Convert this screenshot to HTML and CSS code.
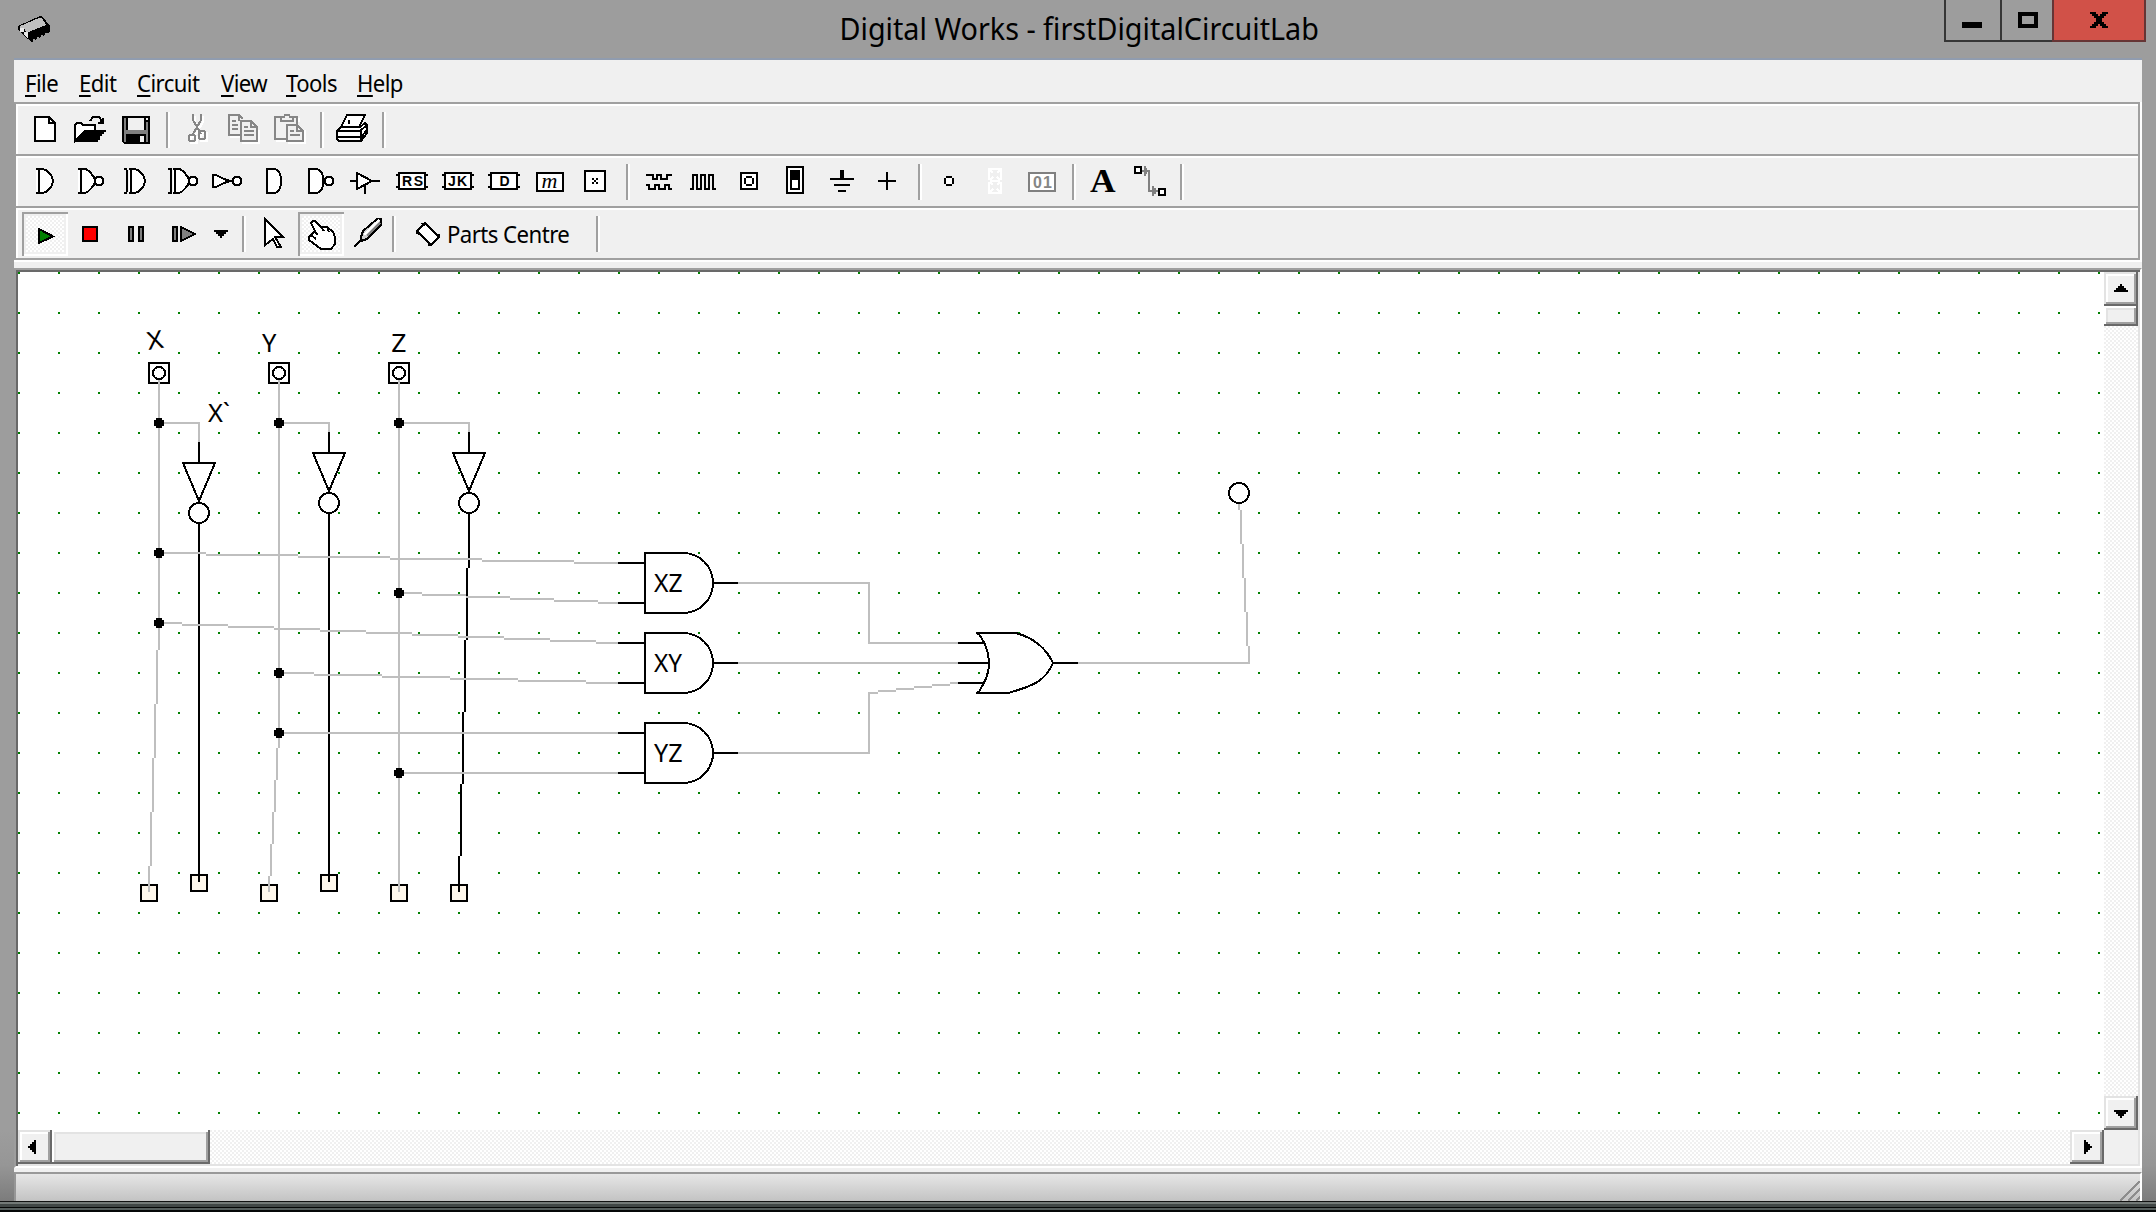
FILE: index.html
```html
<!DOCTYPE html>
<html lang="en">
<head>
<meta charset="utf-8">
<title>Digital Works - firstDigitalCircuitLab</title>
<link rel="stylesheet" href="styles.css">
</head>
<body>
<div class="window">
  <header class="titlebar">
    <svg class="app-icon" width="32" height="26" viewBox="0 0 16 13"><path d="M0 5L11 0H12L16 5V8L7 13L3 10L0 7Z" fill="#000"/><path d="M1 5L10.500 1H12L14 4.500L4 8.500L3.500 6.500H1Z" fill="#c0c0c0"/><path d="M1 6H3V8H1ZM3 8H5V11L3 9.500Z" fill="#e8e8e8"/><path d="M8 11.500V13M10 10.500V12.500M12 9.500V11.500M14 8.500V10.500" stroke="#9d9d9d" stroke-width=".8"/></svg>
    <h1 class="title"><span>Digital Works - firstDigitalCircuitLab</span></h1>
    <div class="controls">
      <button class="ctl min" aria-label="Minimize"><i></i></button>
      <button class="ctl max" aria-label="Maximize"><i></i></button>
      <button class="ctl close" aria-label="Close"><svg width="18" height="16" viewBox="0 0 9 8"><path d="M0 0H3V1H4V2H5V1H6V0H9V1H8V2H7V3H6V5H7V6H8V7H9V8H6V7H5V6H4V7H3V8H0V7H1V6H2V5H3V3H2V2H1V1H0Z"/></svg></button>
    </div>
  </header>
  <div class="client">
    <nav class="menu">
      <span class="m-file"><u>F</u>ile</span><span class="m-edit"><u>E</u>dit</span><span class="m-circuit"><u>C</u>ircuit</span><span class="m-view"><u>V</u>iew</span><span class="m-tools"><u>T</u>ools</span><span class="m-help"><u>H</u>elp</span>
    </nav>
    <div class="bars">
      <div class="bar">
        <svg class="tool" viewBox="0 0 23 24"><path class="w" d="M6.500 5.500H13.500L16.500 8.500V17.500H6.500Z"/><path class="k" d="M13.500 5.500V8.500H16.500"/></svg>
        <svg class="tool" viewBox="0 0 23 24"><path class="w" d="M3.500 17.500V9.500L4.500 8.500H6.500L7.500 9.500H13.500V12.500H8.500Z"/><path d="M8 12H19V13H18V14H17V15H16V17H15V18H3V17H4V16H5V15H6V14H7V13H8Z"/><path class="k" d="M11 7.500L12.500 5.500H15.500L17 7.500"/><path d="M18 6V9H15V8H16V7H17V6Z"/></svg>
        <svg class="tool" viewBox="0 0 23 24"><path d="M4 5H18V19H5L4 18Z"/><path fill="#808080" d="M5 6H6V18H5ZM16 8H17V18H16ZM6 12H16V14H6Z"/><path fill="#f0f0f0" d="M7 6H15V12H7ZM13 15H15V18H13ZM16 6H17V7H16Z"/></svg>
        <i class="sep"></i>
        <svg class="tool off" viewBox="0 0 23 24"><g class="hi" transform="translate(1 1)"><path d="M8.500 4V7L12.500 14M12.500 4V7L8.500 14"/><rect x="6.500" y="14.500" width="3" height="3"/><rect x="11.500" y="12.500" width="3" height="4"/></g><path d="M8.500 4V7L12.500 14M12.500 4V7L8.500 14"/><rect x="6.500" y="14.500" width="3" height="3" rx="1"/><rect x="11.500" y="12.500" width="3" height="4" rx="1"/></svg>
        <svg class="tool off" viewBox="0 0 23 24"><path class="hi" d="M4 15.500H9M10 18.500H18.500V12"/><path d="M9 14.500H3.500V4.500H8.500L10.500 6.500M8.500 5V7.500M5 7.500H7M5 9.500H8M5 11.500H8"/><path d="M9.500 7.500H14.500L17.500 10.500V17.500H9.500ZM14.500 7.500V10.500H17.500M11 10.500H13M11 12.500H16M11 14.500H16"/></svg>
        <svg class="tool off" viewBox="0 0 23 24"><path class="hi" d="M4 17.500H9M10 18.500H18.500V12M15.500 6V8"/><path d="M9 16.500H3.500V5.500H6.500V7.500H12.500V5.500H14.500V9M6.500 5.500H8L8.500 4.500H10.500L11 5.500H12.500"/><path d="M9.500 9.500H14.500L17.500 12.500V17.500H9.500ZM14.500 9.500V12.500H17.500M11 12.500H13M11 14.500H16"/></svg>
        <i class="sep"></i>
        <svg class="tool" viewBox="0 0 23 24"><path class="w" d="M5.500 10.500L8.500 4.500H17.500L14.500 10.500Z"/><path class="w" d="M3.500 12.500L5.500 10.500H15L17.500 8.500L18.500 9.500V13.500L15.500 17.500H4.500L3.500 16.500Z"/><path class="k" d="M3 12.500H15.500V17M15 12.500L18.500 9.500M4 15.500H15.500L18.500 12M9 7.500H10M9 8.500H10"/></svg>
        <i class="sep"></i>
      </div>
      <div class="bar">
        <svg class="tool" viewBox="0 0 23 24"><path class="w" d="M7 5.500H10.500C13 6 15.500 9 15.500 11.500S13 17 10.500 17.500H7M8.500 5.500V17.500"/></svg>
        <svg class="tool" viewBox="0 0 23 24"><path class="w" d="M5 5.500H8.500C10.500 6 13.500 9.500 13.500 11.500S10.500 17 8.500 17.500H5M6.500 5.500V17.500"/><path class="w" d="M14.700 9.500H16.300L17.500 10.700V12.300L16.300 13.500H14.700L13.500 12.300V10.700Z"/></svg>
        <svg class="tool" viewBox="0 0 23 24"><path class="w" d="M7.500 5.500H10.500C13 6 15.500 9 15.500 11.500S13 17 10.500 17.500H7.500M8.500 5.500V17.500"/><path class="k" d="M5 5.500H6.500M5 17.500H6.500M6.500 6V17"/></svg>
        <svg class="tool" viewBox="0 0 23 24"><path class="w" d="M6.500 5.500H9.500C11.500 6 14.500 9.500 14.500 11.500S11.500 17 9.500 17.500H6.500M7.500 5.500V17.500"/><path class="k" d="M4 5.500H5.500V17.500H4"/><path class="w" d="M15.700 9.500H17.300L18.500 10.700V12.300L17.300 13.500H15.700L14.500 12.300V10.700Z"/></svg>
        <svg class="tool" viewBox="0 0 23 24"><path class="w" d="M3.500 8.500H5L9 10.500L12 11.500L9 12.500L5 14.500H3.500Z"/><path class="k" d="M10 11.500H13"/><path class="w" d="M14.700 9.500H16.300L17.500 10.700V12.300L16.300 13.500H14.700L13.500 12.300V10.700Z"/></svg>
        <svg class="tool" viewBox="0 0 23 24"><path class="w" d="M7.500 5.500H11.500C13 6 14.500 8 14.500 11.500S13 17 11.500 17.500H7.500Z"/></svg>
        <svg class="tool" viewBox="0 0 23 24"><path class="w" d="M5.500 5.500H9.500C11.500 6 12.700 8 12.700 11.500S11.500 17 9.500 17.500H5.500Z"/><path class="w" d="M14.700 9.500H16.300L17.500 10.700V12.300L16.300 13.500H14.700L13.500 12.300V10.700Z"/></svg>
        <svg class="tool" viewBox="0 0 23 24"><path class="k" d="M3 11.500H6M13 11.500H18M10.500 13V18"/><path class="w" d="M6.500 7.500L14 11.500L6.500 15.500Z"/></svg>
        <svg class="tool" viewBox="0 0 23 24"><rect class="w" x="4.500" y="7.500" width="13" height="8"/><path class="k" d="M3 8.500H4M3 14.500H4M18 8.500H19M18 14.500H19"/><text x="6" y="14.200" textLength="10.500">RS</text></svg>
        <svg class="tool" viewBox="0 0 23 24"><rect class="w" x="4.500" y="7.500" width="13" height="8"/><path class="k" d="M3 8.500H4M3 14.500H4M18 8.500H19M18 14.500H19"/><text x="6" y="14.200" textLength="9.500">JK</text></svg>
        <svg class="tool" viewBox="0 0 23 24"><rect class="w" x="4.500" y="7.500" width="13" height="8"/><path class="k" d="M3 8.500H4M3 14.500H4M18 8.500H19M18 14.500H19"/><text x="8.700" y="14.200">D</text></svg>
        <svg class="tool" viewBox="0 0 23 24"><rect class="w" x="4.500" y="7.500" width="13" height="9"/><text class="em" x="6.800" y="14.800">m</text></svg>
        <svg class="tool" viewBox="0 0 23 24"><rect class="w" x="5.500" y="6.500" width="10" height="10"/><path d="M9 10H10V11H11V10H12V11H11V12H12V13H11V12H10V13H9V12H10V11H9Z"/></svg>
        <i class="sep"></i>
        <svg class="tool" viewBox="0 0 23 24"><path class="k" d="M5 8.500H8.500V10.500H10.500V8.500H12.500V10.500H15.500V8.500H18M5 13.500H6.500V15.500H9.500V13.500H11.500V15.500H14.500V13.500H16.500V15.500H18"/></svg>
        <svg class="tool" viewBox="0 0 23 24"><path class="k" d="M4 15.500H5.500V8.500H7.500V15.500H9.500V8.500H11.500V15.500H13.500V8.500H15.500V15.500H17"/></svg>
        <svg class="tool" viewBox="0 0 23 24"><rect class="w" x="6.500" y="7.500" width="8" height="8"/><path d="M9 9H12V10H13V13H12V14H9V13H8V10H9Z"/><rect x="9" y="10" width="3" height="3" fill="#fff"/></svg>
        <svg class="tool" viewBox="0 0 23 24"><rect class="w" x="6.500" y="4.500" width="8" height="13"/><rect class="w" x="8.500" y="6.500" width="4" height="9"/><rect x="8" y="6" width="5" height="5"/></svg>
        <svg class="tool" viewBox="0 0 23 24"><path d="M10 6H12V10H17V11H5V10H10ZM7 13H15V14H7ZM9 16H13V17H9Z"/></svg>
        <svg class="tool" viewBox="0 0 23 24"><path class="k" d="M6 11.500H15M10.500 7V16"/></svg>
        <i class="sep"></i>
        <svg class="tool" viewBox="0 0 23 24"><path d="M9 9H12V10H13V13H12V14H9V13H8V10H9Z"/><rect x="9" y="10" width="3" height="3" fill="#fff"/></svg>
        <svg class="tool" viewBox="0 0 23 24"><path d="M8 5.500H13M8 11.500H13M8 17.500H13M7.500 5V11M13.500 5V11M7.500 12V18M13.500 12V18M8 6L9.500 7.500M13 6L11.500 7.500M8 11L9.500 9.500M13 11L11.500 9.500M8 12L9.500 13.500M13 12L11.500 13.500M8 17L9.500 15.500M13 17L11.500 15.500" stroke="#fff" stroke-width="1.200" fill="none"/></svg>
        <svg class="tool" viewBox="0 0 23 24"><rect x="4.500" y="7.500" width="13" height="9" fill="#fff" stroke="#808080"/><text class="dim" x="6.500" y="14.900" textLength="9.500">01</text></svg>
        <i class="sep"></i>
        <svg class="tool" viewBox="0 0 23 24"><text class="serif" x="4" y="17" textLength="12.800" lengthAdjust="spacingAndGlyphs">A</text></svg>
        <svg class="tool" viewBox="0 0 23 24"><path d="M7 6.500H10.500V16.500H15M8.500 4V9M9 5V8M12.500 14V19M13.500 15V18" fill="none" stroke="#808080"/><rect class="w" x="3.500" y="4.500" width="3" height="3"/><rect class="w" x="15.500" y="15.500" width="3" height="3"/></svg>
        <i class="sep"></i>
      </div>
      <div class="bar">
        <svg class="tool down" viewBox="0 1 23 22"><path fill="#008000" stroke="#000" d="M8.500 9.500L15.500 13.200L8.500 16.500Z"/></svg>
        <svg class="tool" viewBox="0 0 23 24"><rect x="7.500" y="8.500" width="7" height="7" fill="#f00" stroke="#000"/></svg>
        <svg class="tool" viewBox="0 0 23 24"><path fill="#808080" stroke="#000" d="M7.500 8.500H9.500V15.500H7.500ZM12.500 8.500H14.500V15.500H12.500Z"/></svg>
        <svg class="tool" viewBox="0 0 23 24"><path fill="#808080" stroke="#000" d="M6.500 8.500H8.500V15.500H6.500ZM10.500 8.500L17.500 12L10.500 15.500Z"/></svg>
        <svg class="tool drop" viewBox="0 0 15 24"><path d="M4 10H11V11H10V12H9V13H8V14H7V13H6V12H5V11H4Z"/></svg>
        <i class="sep"></i>
        <svg class="tool" viewBox="0 0 23 24"><path class="w" d="M6.500 4.500L15.500 13.500H11.500L14.500 18.500H12.500L10.500 14.500L6.500 17.500Z"/></svg>
        <svg class="tool down" viewBox="0 1 23 22"><path class="w" d="M6.500 6.500L7.500 5.500H8.500L11.500 8.500H14.500L17.500 11L18.500 13.500V17L16.500 19.500H11.500L5.500 15V13.500L6.500 12.500L8.500 10.500Z"/><path class="k" d="M8 10.500L10 12.500M6.500 12.500L9 14.500M11.500 8.500L13 10.500M14.500 8.500L15.500 11"/></svg>
        <svg class="tool" viewBox="0 0 23 24"><path fill="#ccc" stroke="#000" d="M16.500 4.500H18.500V7.500L11.500 14.500L8.500 15.500V13.500L9.500 10.500Z"/><path class="k" d="M5 18.500L9 14.500"/><path d="M10 12.500L17.500 5" stroke="#fff" fill="none"/><path d="M11.500 13L18 6.500" stroke="#808080" stroke-width="1"/></svg>
        <i class="sep tight"></i>
        <div class="parts"><svg width="24" height="24" viewBox="0 0 12 12"><path class="w" d="M.500 4.500L4.500 .500L11.500 7.500L7.500 11.500Z"/><path class="k" d="M3 .500L4 2M0 5.500L2 6M10 6.500H12M6.500 10V12"/></svg><span>Parts Centre</span></div>
        <i class="sep"></i>
      </div>
    </div>
    <main class="view">
      <div class="upper">
        <svg class="canvas" viewBox="9 136 1043 429">
          <defs>
            <pattern id="grid" x="9" y="136" width="20" height="20" patternUnits="userSpaceOnUse"><rect width="1" height="1" fill="#008000"/></pattern>
            <g id="not"><path class="k" d="M.500 -10V1"/><path class="o" d="M-7.500 .500H8.500L.500 19.500Z"/><circle class="o" cx=".500" cy="25.500" r="5"/></g>
            <g id="and"><path class="w" d="M322.500 .500H341.500A15 15 0 0 1 341.500 30.500H322.500Z"/><path class="k" d="M309 5.500H322M309 25.500H322M357 15.500H369"/></g>
            <g id="switch"><rect class="w" x=".500" y=".500" width="10" height="10"/><circle class="w" cx="5.500" cy="5.500" r="3"/></g>
            <rect id="pad" x=".500" y=".500" width="8" height="8" fill="#fff8ec" stroke="#000"/>
            <path id="node" d="M-1 -2H2V-1H3V2H2V3H-1V2H-2V-1H-1Z"/>
          </defs>
          <rect x="9" y="136" width="1043" height="429" fill="#fff"/>
          <rect x="9" y="136" width="1043" height="429" fill="url(#grid)"/>
          <use href="#switch" x="74" y="181"/><use href="#switch" x="134" y="181"/><use href="#switch" x="194" y="181"/>
          <use href="#pad" x="70" y="442"/><use href="#pad" x="95" y="437"/><use href="#pad" x="130" y="442"/><use href="#pad" x="160" y="437"/><use href="#pad" x="195" y="442"/><use href="#pad" x="225" y="442"/>
          <use href="#not" x="99" y="231"/><use href="#not" x="164" y="226"/><use href="#not" x="234" y="226"/>
          <path class="k" d="M99.500 262V441M164.500 257V441M234.500 257V284M233.500 284V320M232.500 320V356M231.500 356V392M230.500 392V428M229.500 428V446"/>
          <g class="wire">
            <path d="M79.500 190V325M78.500 325V352M77.500 352V379M76.500 379V406M75.500 406V433M74.500 433V446"/>
            <path d="M139.500 190V374M138.500 374V390M137.500 390V406M136.500 406V422M135.500 422V438M134.500 438V446"/>
            <path d="M199.500 190V446"/>
            <path d="M79 211.500H99.500V221M139 211.500H164.500V216M199 211.500H234.500V216"/>
            <path d="M79 276.500H103M103 277.500H149M149 278.500H195M195 279.500H241M241 280.500H287M287 281.500H309"/>
            <path d="M199 296.500H211M211 297.500H233M233 298.500H255M255 299.500H277M277 300.500H299M299 301.500H309"/>
            <path d="M79 311.500H91M91 312.500H114M114 313.500H137M137 314.500H160M160 315.500H183M183 316.500H206M206 317.500H229M229 318.500H252M252 319.500H275M275 320.500H298M298 321.500H309"/>
            <path d="M139 336.500H157M157 337.500H191M191 338.500H225M225 339.500H259M259 340.500H293M293 341.500H309"/>
            <path d="M139 366.500H309M199 386.500H309"/>
            <path d="M369 291.500H434.500V321.500H479M369 331.500H479M369 376.500H434.500V346.500H439M439 345.500H448M448 344.500H457M457 343.500H466M466 342.500H475M475 341.500H479"/>
            <path d="M539 331.500H624.500V323M623.500 323V306M622.500 306V289M621.500 289V272M620.500 272V255M619.500 255V252"/>
          </g>
          <use href="#node" x="79" y="211"/><use href="#node" x="139" y="211"/><use href="#node" x="199" y="211"/><use href="#node" x="79" y="276"/><use href="#node" x="79" y="311"/><use href="#node" x="199" y="296"/><use href="#node" x="139" y="336"/><use href="#node" x="139" y="366"/><use href="#node" x="199" y="386"/>
          <use href="#and" y="276"/><use href="#and" y="316"/><use href="#and" y="361"/>
          <path class="w" d="M488 316.500H508C517 319 523 324 526.500 331.500C523 340 517 343 504 346.500H488L489.500 346C492 341 494.500 338 494.500 331.500S492 321 489.500 317Z"/>
          <path class="k" d="M479 321.500H492M479 331.500H495M479 341.500H492M527 331.500H539"/>
          <circle class="w" cx="619.500" cy="246.500" r="5"/>
          <g class="labels">
            <text x="73.500" y="174.500" textLength="8" lengthAdjust="spacingAndGlyphs" transform="rotate(-9 77 170)">X</text>
            <text x="131" y="176" textLength="7.200" lengthAdjust="spacingAndGlyphs">Y</text>
            <text x="195.600" y="176" textLength="7.600" lengthAdjust="spacingAndGlyphs">Z</text>
            <text x="104" y="211" textLength="11" lengthAdjust="spacingAndGlyphs">X`</text>
            <text x="327" y="296" textLength="14.300" lengthAdjust="spacingAndGlyphs">XZ</text>
            <text x="327" y="336" textLength="14" lengthAdjust="spacingAndGlyphs">XY</text>
            <text x="327" y="381" textLength="14.300" lengthAdjust="spacingAndGlyphs">YZ</text>
          </g>
        </svg>
        <div class="vscroll">
          <div class="sbtn up"><svg width="14" height="8" viewBox="0 0 7 4"><path d="M3 0H4V1H5V2H6V3H7V4H0V3H1V2H2V1H3Z"/></svg></div>
          <div class="thumb"></div>
          <div class="track"></div>
          <div class="sbtn dn"><svg width="14" height="8" viewBox="0 0 7 4"><path d="M0 0H7V1H6V2H5V3H4V4H3V3H2V2H1V1H0Z"/></svg></div>
        </div>
      </div>
      <div class="hscroll">
        <div class="sbtn lt"><svg width="8" height="14" viewBox="0 0 4 7"><path d="M3 0H4V7H3V6H2V5H1V4H0V3H1V2H2V1H3Z"/></svg></div>
        <div class="thumb"></div>
        <div class="track"></div>
        <div class="sbtn rt"><svg width="8" height="14" viewBox="0 0 4 7"><path d="M0 0H1V1H2V2H3V3H4V4H3V5H2V6H1V7H0Z"/></svg></div>
        <div class="corner"></div>
      </div>
    </main>
    <footer class="status"><svg width="20" height="20" viewBox="0 0 10 10"><path d="M0 10L10 0M4 10L10 4M8 10L10 8" stroke="#8c8c8c" stroke-width="1.300"/></svg></footer>
  </div>
  <div class="taskbar"></div>
</div>
</body>
</html>
```
FILE: styles.css
```css
* { box-sizing: border-box; }
body { margin: 0; overflow: hidden; font-family: "Noto Sans", "Open Sans", sans-serif; color: #000; }
svg { display: block; shape-rendering: crispEdges; }
.window { width: 2156px; height: 1212px; display: flex; flex-direction: column; background: linear-gradient(#9d9d9d 0 1130px, #969696 1165px, #7c7c7c 1201px); }

/* Title bar */
.titlebar { height: 58px; flex: none; display: grid; grid-template-columns: 212px 1fr 212px; }
.app-icon { margin: 16px 0 0 18px; }
.title { margin: 0; font-size: 30px; font-weight: 400; line-height: 58px; text-align: center; white-space: nowrap; }
.title span { display: inline-block; transform: scaleX(.958); margin-left: 2px; }
.controls { display: flex; height: 42px; }
.ctl { border: solid #363636; border-width: 0 0 2px 2px; background: none; padding: 0; display: flex; justify-content: flex-start; }
.min { width: 56px; padding-left: 16px; }
.min i { width: 20px; height: 6px; margin-top: 22px; background: #000; }
.max { width: 52px; padding-left: 16px; }
.max i { width: 20px; height: 16px; margin-top: 12px; border: 4px solid #000; }
.close { width: 94px; border: 2px solid #663535; border-top: 0; background: #d15148; padding: 12px 0 0 36px; }

/* Client area */
.client { flex: 1; margin: 0 14px; border-top: 2px solid #909caf; background: #f0f0f0; display: flex; flex-direction: column; min-height: 0; }
.menu { height: 42px; flex: none; display: flex; padding-left: 11px; font-size: 23.500px; line-height: 46px; }
.menu span { white-space: nowrap; letter-spacing: -.6px; transform: scaleX(.94); transform-origin: 0 0; }
.menu u { text-decoration-thickness: 2px; text-underline-offset: 3px; text-decoration-skip-ink: none; }
.m-file { width: 54px; }
.m-edit { width: 58px; }
.m-circuit { width: 84px; }
.m-view { width: 65px; }
.m-tools { width: 71px; }

/* Toolbars */
.bars { flex: none; height: 160px; border-right: 2px solid #fff; border-bottom: 2px solid #fff; }
.bar { height: 52px; border: 2px solid #a0a0a0; border-left-color: #9d9d9d; border-bottom: 0; box-shadow: inset 2px 2px #fff; padding: 2px 0 0 6px; display: flex; align-items: center; }
.bar:last-child { height: 54px; border-bottom: 2px solid #a0a0a0; }
.tool { width: 46px; height: 48px; flex: none; }
.drop { width: 30px; }
.down { height: 44px; background: conic-gradient(#fff 25%, #f0f0f0 0 50%, #fff 0 75%, #f0f0f0 0) 0 0 / 4px 4px; box-shadow: inset 2px 2px #a0a0a0, inset -2px -2px #fff, inset 4px 4px #f0f0f0, inset -4px -4px #f0f0f0; }
.sep { flex: none; width: 4px; height: 36px; margin: 0 6px; border-left: 2px solid #a0a0a0; border-right: 2px solid #fff; }
.sep.tight { margin: 0 6px 0 2px; }
.w { fill: #fff; stroke: #000; }
.k { fill: none; stroke: #000; }
.o { fill: none; stroke: #000; }
.off path, .off rect { fill: none; stroke: #868686; }
.off .hi, .off .hi path, .off .hi rect { stroke: #fff; }
.tool text { font: 700 7px "Liberation Sans", sans-serif; }
.tool .em { font: italic 400 11px "Liberation Serif", serif; }
.tool .dim { font: 700 8px "Liberation Sans", sans-serif; fill: #868686; }
.tool .serif { font: 700 16.500px "Liberation Serif", serif; }
.parts { flex: none; width: 188px; padding-left: 14px; display: flex; align-items: center; gap: 7px; font-size: 23.500px; letter-spacing: -.6px; white-space: nowrap; }
.parts span { transform: scaleX(.945); transform-origin: 0 0; }

/* Drawing area and scroll bars */
.view { flex: none; height: 900px; margin-top: 6px; border: 2px solid #a0a0a0; border-left-color: #9d9d9d; border-right-color: #fff; border-bottom-color: #fff; box-shadow: inset 2px 2px #696969, inset -2px -2px #e3e3e3; padding: 2px; }
.upper { display: flex; height: 858px; }
.canvas { width: 2086px; height: 858px; flex: none; }
.wire { fill: none; stroke: #bfbfbf; }
.labels text { font-size: 12.400px; }
.vscroll { width: 34px; display: flex; flex-direction: column; }
.hscroll { height: 34px; display: flex; }
.sbtn, .thumb { flex: none; background: #f0f0f0; }
.sbtn { width: 34px; height: 34px; box-shadow: inset -2px -2px #696969, inset 2px 2px #e3e3e3, inset -4px -4px #a0a0a0, inset 4px 4px #fff; }
.up { padding: 12px 0 0 10px; }
.dn { padding: 14px 0 0 10px; }
.lt { padding: 10px 0 0 10px; }
.rt { padding: 10px 0 0 14px; }
.thumb { box-shadow: inset -2px -2px #696969, inset 2px 2px #fff, inset -4px -4px #a0a0a0, inset 4px 4px #e3e3e3; }
.vscroll .thumb { height: 20px; }
.hscroll .thumb { width: 158px; }
.track { flex: 1; background: conic-gradient(#fff 25%, #f0f0f0 0 50%, #fff 0 75%, #f0f0f0 0) 0 0 / 4px 4px; }
.corner { width: 34px; background: #f0f0f0; }

/* Status bar and desktop edge */
.status { flex: 1; margin-top: 4px; border: solid #999; border-width: 2px 2px 0; border-left-color: #969696; border-right-color: #fff; background: linear-gradient(#e6e6e6, #c3c3c3); display: flex; justify-content: flex-end; align-items: flex-end; }
.taskbar { height: 11px; flex: none; background: linear-gradient(#111 0 1px, #737977 1px 3px, #414746 3px 6px, #050606 6px 7px, #555d5c 7px 9px, #050808 9px); }
```
